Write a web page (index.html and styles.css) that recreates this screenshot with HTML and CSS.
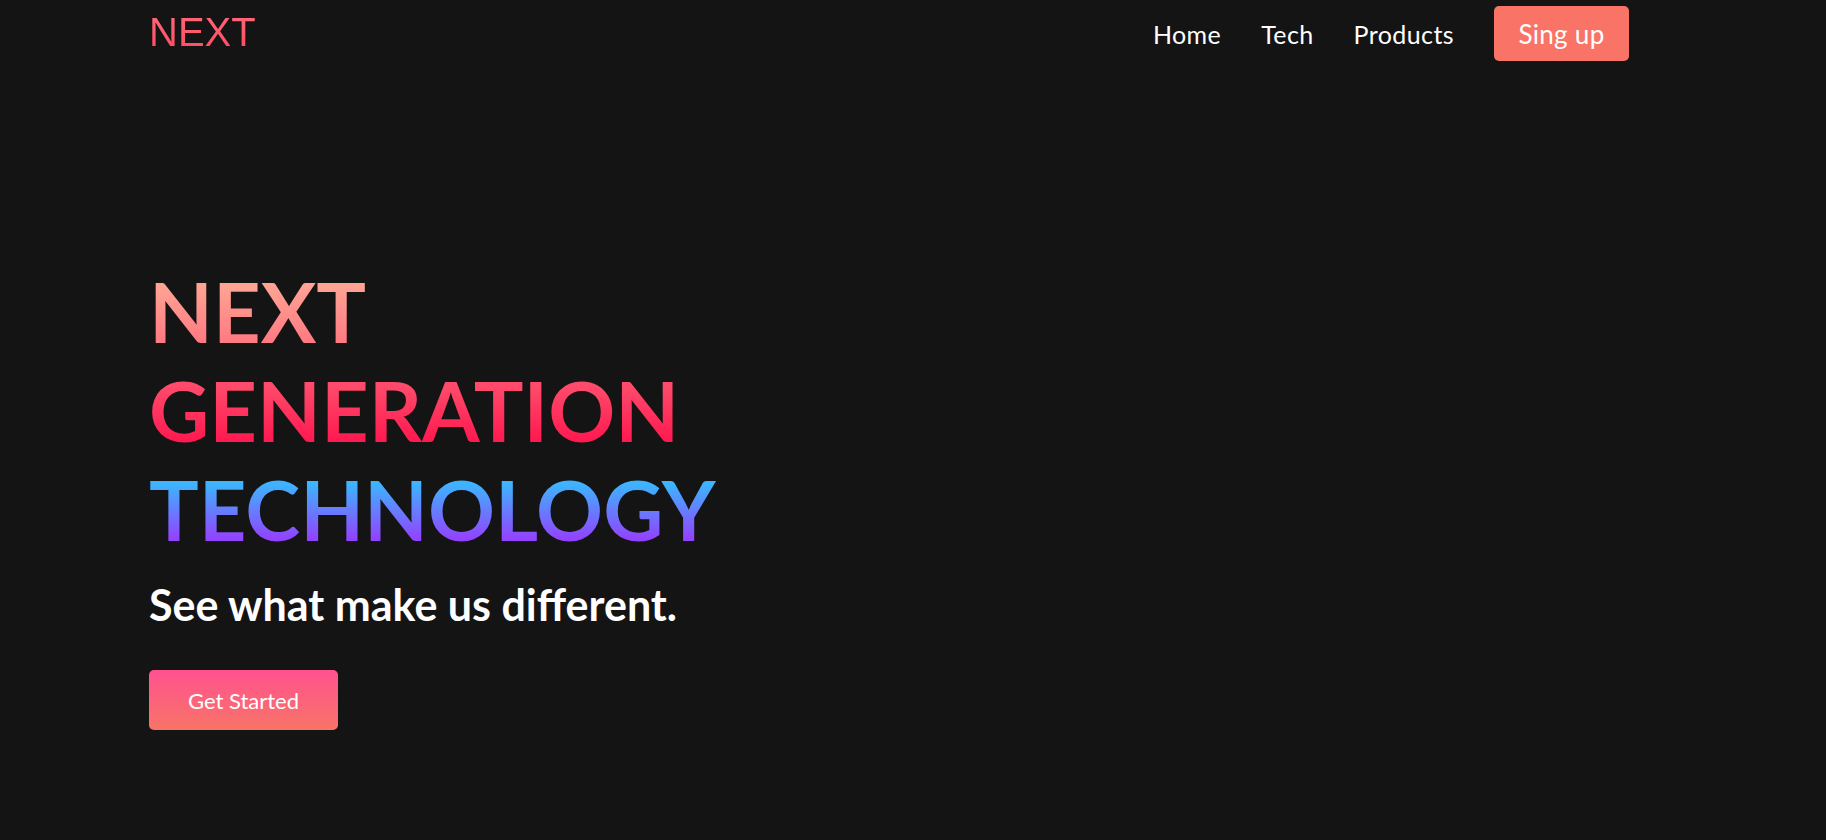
FILE: index.html
```html
<!DOCTYPE html>
<html lang="en">
<head>
<meta charset="utf-8">
<title>NEXT</title>
<link rel="stylesheet" href="styles.css">
</head>
<body>
<div class="page">
  <header class="nav">
    <div class="logo">NEXT</div>
    <nav class="menu">
      <a class="menu-link" href="#">Home</a>
      <a class="menu-link" href="#">Tech</a>
      <a class="menu-link" href="#">Products</a>
      <a class="signup" href="#">Sing up</a>
    </nav>
  </header>
  <main class="hero">
    <h1 class="title">
      <span class="line line-next">NEXT</span>
      <span class="line line-gen">GENERATION</span>
      <span class="line line-tech">TECHNOLOGY</span>
    </h1>
    <p class="subtitle">See what make us different.</p>
    <a class="cta" href="#">Get Started</a>
  </main>
</div>
</body>
</html>
```

FILE: styles.css
```css
* { box-sizing: border-box; }
html, body { margin: 0; padding: 0; }
body {
  background: #141414;
  color: #fff;
  font-family: "Lato", "Open Sans", sans-serif;
  height: 840px;
  overflow: hidden;
}
.page {
  padding: 0 197px 0 149px;
}
.nav {
  display: flex;
  align-items: center;
  justify-content: space-between;
  height: 67px;
}
.logo {
  font-family: "Liberation Sans", Arial, sans-serif;
  font-size: 40px;
  font-weight: 400;
  background: linear-gradient(180deg, #ff6a78, #ff4a62);
  -webkit-background-clip: text;
  background-clip: text;
  color: transparent;
  line-height: 1;
  margin-top: -3px;
}
.menu {
  display: flex;
  align-items: center;
}
.menu-link {
  color: #fff;
  text-decoration: none;
  font-size: 25px;
  letter-spacing: 0.4px;
  margin-right: 40px;
}
.signup {
  display: flex;
  align-items: center;
  justify-content: center;
  width: 135px;
  height: 55px;
  background: #f97366;
  color: #fff;
  text-decoration: none;
  border-radius: 5px;
  font-size: 26px;
  letter-spacing: 0.3px;
}
.hero {
  padding-top: 195px;
}
.title {
  margin: 0;
  font-size: 83px;
  line-height: 99px;
  font-weight: 700;
  display: flex;
  flex-direction: column;
  align-items: flex-start;
}
.line {
  -webkit-background-clip: text;
  background-clip: text;
  color: transparent;
}
.line-next { background-image: linear-gradient(180deg, #ffa393 25%, #ff7a82 80%); }
.line-gen { background-image: linear-gradient(180deg, #ff4b6b 25%, #ff1a50 80%); }
.line-tech { background-image: linear-gradient(180deg, #3eb3ff 25%, #9342ff 80%); }
.subtitle {
  margin: 20px 0 0;
  font-size: 43px;
  font-weight: 700;
  line-height: 52px;
}
.cta {
  display: flex;
  align-items: center;
  justify-content: center;
  width: 189px;
  height: 60px;
  margin-top: 39px;
  border-radius: 5px;
  background: linear-gradient(180deg, #ff5290, #f87466);
  color: #fff;
  text-decoration: none;
  font-size: 22px;
}
```
